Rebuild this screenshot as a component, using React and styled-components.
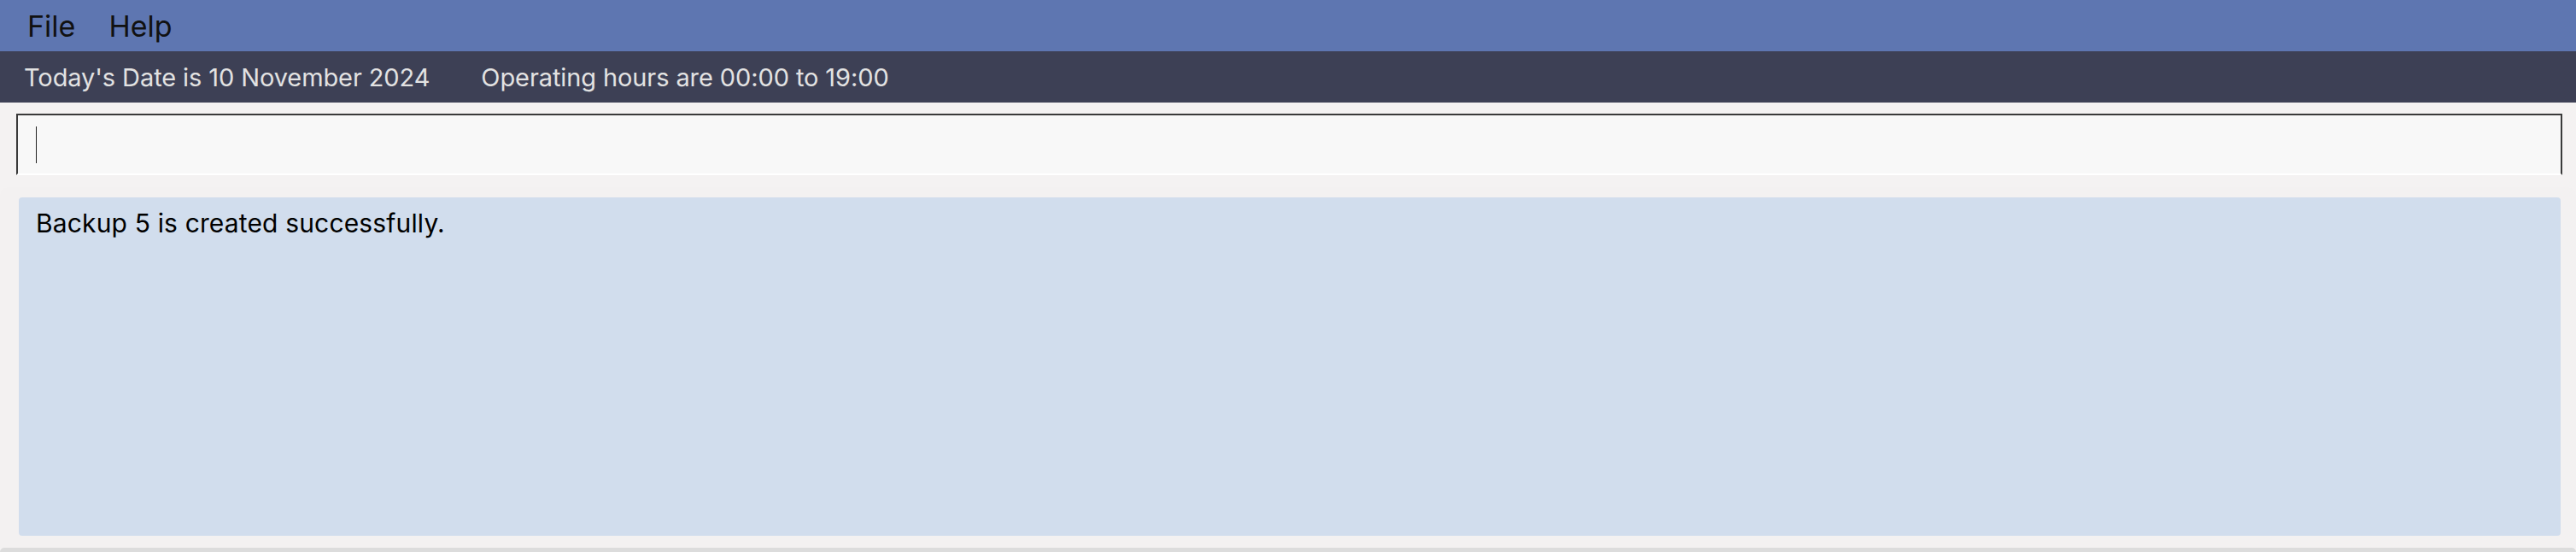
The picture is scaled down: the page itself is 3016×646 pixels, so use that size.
import React from "react";
import styled, { createGlobalStyle } from "styled-components";

const GlobalStyle = createGlobalStyle`
  html, body {
    margin: 0;
    padding: 0;
    background: #f4f2f2;
    overflow: hidden;
  }
  body {
    font-family: Inter, "Noto Sans", sans-serif;
  }
`;

export default function App() {
  return (
    <>
      <GlobalStyle />
      <Window>
        <MenuBar>
          <MenuItem>File</MenuItem>
          <MenuItem>Help</MenuItem>
        </MenuBar>
        <StatusBar>
          <StatusText>Today's Date is 10 November 2024</StatusText>
          <StatusText>Operating hours are 00:00 to 19:00</StatusText>
        </StatusBar>
        <CommandPanel>
          <CommandField>
            <Caret />
          </CommandField>
        </CommandPanel>
        <ResultPanel>
          <ResultBox>Backup 5 is created successfully.</ResultBox>
        </ResultPanel>
        <FooterPanel />
      </Window>
    </>
  );
}

const Window = styled.div`
  width: 3016px;
  height: 646px;
  display: flex;
  flex-direction: column;
  background: #f4f2f2;
  overflow: hidden;
`;

const MenuBar = styled.div`
  height: 60px;
  flex-shrink: 0;
  background: #5e76b1;
  display: flex;
  align-items: center;
  padding-left: 32px;
  gap: 39px;
`;

const MenuItem = styled.span`
  font-size: 34px;
  color: #111;
`;

const StatusBar = styled.div`
  height: 60px;
  flex-shrink: 0;
  background: #3d4055;
  display: flex;
  align-items: center;
  padding-left: 28px;
  gap: 60px;
`;

const StatusText = styled.span`
  font-size: 29px;
  letter-spacing: -0.1px;
  color: #e2e2e2;
`;

const CommandPanel = styled.div`
  padding: 13px 16px 11px 19px;
  flex-shrink: 0;
`;

const CommandField = styled.div`
  height: 68px;
  background: #f8f8f8;
  border: 2px solid #3a3a3a;
  border-bottom: 2px solid #ffffff;
  display: flex;
  align-items: center;
  padding-left: 21px;
`;

const Caret = styled.div`
  width: 1px;
  height: 43px;
  background: #222;
`;

const ResultPanel = styled.div`
  margin-top: 3px;
  padding: 12px 18px 14px 22px;
  background: #f3f1f1;
  border-radius: 10px 10px 0 0;
  flex-shrink: 0;
`;

const ResultBox = styled.div`
  height: 396px;
  box-sizing: border-box;
  background: #d1dded;
  border-radius: 4px;
  padding: 12px 20px;
  font-size: 30px;
  letter-spacing: 0.15px;
  color: #000;
`;

const FooterPanel = styled.div`
  flex: 1;
  background: #dcdcdc;
  border-radius: 14px 14px 0 0;
`;
